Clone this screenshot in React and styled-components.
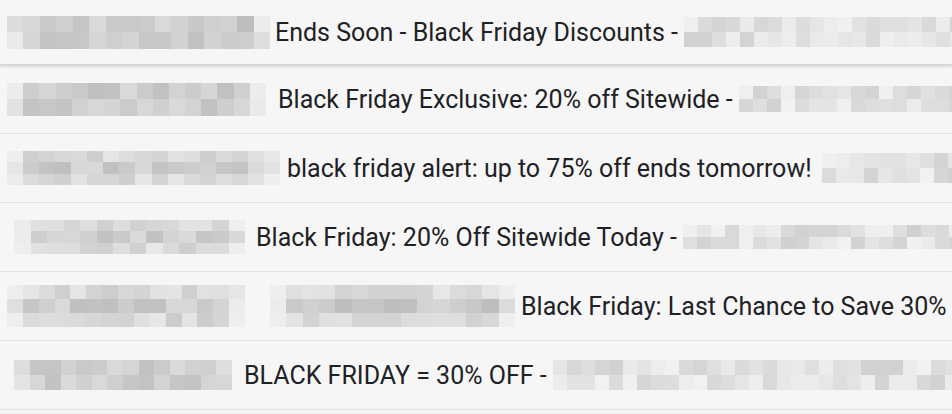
import React from "react";
import styled, { createGlobalStyle } from "styled-components";

const Global = createGlobalStyle`
  html, body { margin: 0; padding: 0; background: #f5f5f5; }
  body { font-family: Roboto, "Noto Sans", Arial, sans-serif; overflow: hidden; }
`;

const List = styled.div`
  width: 952px;
  height: 414px;
  background: #f5f5f5;
  display: flex;
  flex-direction: column;
  overflow: hidden;
`;

const Row = styled.div`
  height: ${(p) => p.$h}px;
  flex: none;
  display: flex;
  align-items: center;
  gap: ${(p) => p.$gap}px;
  padding-left: ${(p) => p.$pad}px;
  box-sizing: border-box;
  border-bottom: 1px solid #e3e3e3;
  background: #f6f6f6;
  white-space: nowrap;
  overflow: hidden;
  position: relative;
  ${(p) =>
    p.$hover &&
    `border-bottom-color: #d6d6d6; box-shadow: 0 1px 3px rgba(60,64,67,0.25); z-index: 1;`}
`;

const Subject = styled.span`
  font-size: 25px;
  color: #202124;
  flex: none;
  margin-right: ${(p) => p.$after || 0}px;
`;

const Mosaic = styled.div`
  flex: none;
  display: grid;
  grid-template-columns: repeat(${(p) => p.$cols}, 1fr);
  grid-auto-rows: 1fr;
  width: ${(p) => p.$w}px;
  height: ${(p) => p.$hh}px;
  align-self: center;
`;

const Cell = styled.div``;

function rng(seed) {
  let s = seed * 9301 + 49297;
  return () => {
    s = (s * 9301 + 49297) % 233280;
    return s / 233280;
  };
}

function Blur({ w, h, seed, cell = 16, rows = 2, light = false }) {
  const cols = Math.max(1, Math.round(w / cell));
  const r = rng(seed);
  const cells = [];
  for (let y = 0; y < rows; y++) {
    for (let x = 0; x < cols; x++) {
      const edge = !light && (x === 0 || x === cols - 1);
      let base;
      if (light) base = 208 + r() * 34;
      else base = 190 + r() * 28;
      if (edge) base = Math.min(236, base + 24);
      if (rows === 3 && (y === 0 || y === 2)) base = Math.min(238, base + 14);
      const v = Math.round(base);
      cells.push(
        <Cell key={y + "-" + x} style={{ background: `rgb(${v},${v},${v + 1})` }} />
      );
    }
  }
  return (
    <Mosaic $cols={cols} $w={w} $hh={h}>
      {cells}
    </Mosaic>
  );
}

const rows = [
  { h: 65, pad: 7, textX: 275, sender: [{ w: 263, h: 33, rows: 2, seed: 3 }], subject: "Ends Soon - Black Friday Discounts -", after: 0, snip: { h: 30, seed: 11 }, hover: true },
  { h: 69, pad: 7, textX: 278, sender: [{ w: 259, h: 33, rows: 2, seed: 5 }], subject: "Black Friday Exclusive: 20% off Sitewide -", after: 0, snip: { h: 26, seed: 17 } },
  { h: 69, pad: 7, textX: 287, sender: [{ w: 273, h: 34, rows: 3, seed: 7 }], subject: "black friday alert: up to 75% off ends tomorrow!", after: 4, snip: { h: 30, seed: 23 } },
  { h: 69, pad: 14, textX: 256, sender: [{ w: 231, h: 34, rows: 3, seed: 9 }], subject: "Black Friday: 20% Off Sitewide Today -", after: 0, snip: { h: 24, seed: 29 } },
  { h: 69, pad: 7, textX: 521, sender: [{ w: 238, h: 42, rows: 3, seed: 13 }, { w: 245, h: 42, rows: 3, seed: 19 }], subject: "Black Friday: Last Chance to Save 30%", snip: null, gapSender: 25 },
  { h: 69, pad: 14, textX: 244, sender: [{ w: 218, h: 30, rows: 2, seed: 21 }], subject: "BLACK FRIDAY = 30% OFF -", after: 0, snip: { h: 30, seed: 31 } },
];

const SenderGroup = styled.div`
  display: flex;
  gap: ${(p) => p.$gap}px;
  flex: none;
  margin-right: ${(p) => p.$mr}px;
`;

export default function App() {
  return (
    <>
      <Global />
      <List>
        {rows.map((r, i) => {
          const gs = r.gapSender || 0;
          const senderW = r.sender.reduce((a, s) => a + s.w, 0) + gs * (r.sender.length - 1);
          const mr = r.textX - r.pad - senderW - 6;
          return (
            <Row key={i} $h={r.h} $pad={r.pad} $gap={6} $hover={r.hover}>
              <SenderGroup $gap={gs} $mr={mr}>
                {r.sender.map((s, j) => (
                  <Blur key={j} w={s.w} h={s.h} rows={s.rows} seed={s.seed} />
                ))}
              </SenderGroup>
              <Subject $after={r.after}>{r.subject}</Subject>
              {r.snip && <Blur w={420} h={r.snip.h} seed={r.snip.seed} cell={14} rows={2} light />}
            </Row>
          );
        })}
      </List>
    </>
  );
}
